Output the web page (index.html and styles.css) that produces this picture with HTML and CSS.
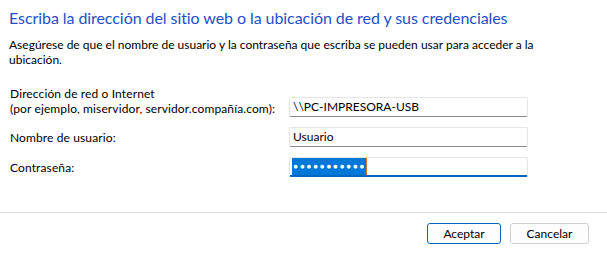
FILE: index.html
```html
<!DOCTYPE html>
<html lang="es">
<head>
<meta charset="utf-8">
<title>Credenciales</title>
<link rel="stylesheet" href="styles.css">
</head>
<body>
<div class="dialog">
	<div class="content">
		<h1 class="title">Escriba la dirección del sitio web o la ubicación de red y sus credenciales</h1>
		<p class="intro">Asegúrese de que el nombre de usuario y la contraseña que escriba se pueden usar para acceder a la ubicación.</p>

		<div class="form">
			<label class="label label-multi">Dirección de red o Internet<br>(por ejemplo, miservidor, servidor.compañía.com):</label>
			<div class="field">\\PC-IMPRESORA-USB</div>

			<label class="label">Nombre de usuario:</label>
			<div class="field">Usuario</div>

			<label class="label">Contraseña:</label>
			<div class="field field-focus"><span class="sel">●●●●●●●●●●●</span><span class="caret"></span></div>
		</div>
	</div>

	<div class="footer">
		<button class="btn btn-default">Aceptar</button>
		<button class="btn">Cancelar</button>
	</div>
</div>
</body>
</html>
```

FILE: styles.css
```css
body {
	margin: 0;
	background: #fff;
	font-family: Lato, "Open Sans", sans-serif;
	font-size: 12px;
	color: #000;
}
.dialog {
	width: 607px;
	height: 256px;
	display: flex;
	flex-direction: column;
}
.content {
	padding: 7px 9px 0 9px;
	height: 205px;
}
.title {
	margin: 0;
	font-size: 16px;
	font-weight: normal;
	color: #1f4fc4;
	line-height: 21px;
	letter-spacing: -0.07px;
}
.intro {
	margin: 9px 0 0 0;
	line-height: 15px;
	width: 560px;
}
.form {
	margin-top: 19px;
	display: grid;
	grid-template-columns: 280px 239px;
	row-gap: 10px;
	align-items: center;
}
.label {
	line-height: 15px;
	letter-spacing: 0.12px;
	padding-left: 1px;
}
.label-multi {
	align-self: end;
	margin-bottom: 1px;
}
.field {
	box-sizing: border-box;
	height: 20px;
	border: 1px solid #e5e5e5;
	border-bottom-color: #8a8a8a;
	border-radius: 2px;
	padding: 0 3px;
	line-height: 18px;
	background: #fff;
	white-space: nowrap;
	overflow: hidden;
}
.label-multi + .field {
	align-self: end;
}
.field-focus {
	border-bottom: 2px solid #0067c0;
	padding: 0 2px;
	line-height: 17px;
}
.sel {
	display: inline-block;
	background: #0078d7;
	color: #fff;
	font-family: "Liberation Sans", sans-serif;
	font-size: 8.5px;
	letter-spacing: 1.5px;
	line-height: 17px;
	height: 17px;
	padding: 0 0 0 1px;
	vertical-align: top;
}
.caret {
	display: inline-block;
	width: 1px;
	height: 17px;
	background: #e07030;
	vertical-align: top;
}
.footer {
	border-top: 1px solid #d9d9d9;
	flex: 1;
	display: flex;
	justify-content: flex-end;
	align-items: flex-start;
	gap: 9px;
	padding: 10px 18px 0 0;
}
.btn {
	box-sizing: border-box;
	width: 74px;
	height: 21px;
	font-family: inherit;
	font-size: 12px;
	background: #fdfdfd;
	border: 1px solid #d0d0d0;
	border-radius: 3px;
	padding: 0;
	color: #000;
}
.btn-default {
	border: 1px solid #0067c0;
}
.btn + .btn {
	width: 79px;
}
```
